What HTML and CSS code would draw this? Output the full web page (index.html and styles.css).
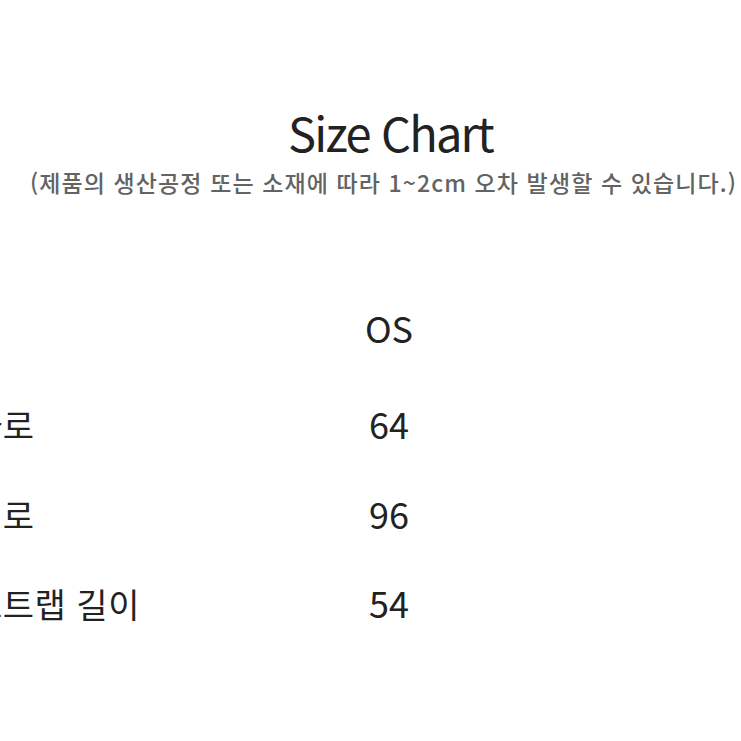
FILE: index.html
```html
<!DOCTYPE html>
<html lang="ko">
<head>
<meta charset="utf-8">
<link rel="stylesheet" href="styles.css">
</head>
<body>
<main class="page">
  <header class="head">
    <h1 class="title">Size Chart</h1>
    <p class="note">(제품의 생산공정 또는 소재에 따라 1~2cm 오차 발생할 수 있습니다.)</p>
  </header>
  <section class="chart">
    <div class="label first"></div><div class="value first">OS</div>
    <div class="label">가로</div><div class="value">64</div>
    <div class="label">세로</div><div class="value">96</div>
    <div class="label">스트랩 길이</div><div class="value">54</div>
  </section>
</main>
</body>
</html>
```

FILE: styles.css
```css
html, body {
  margin: 0;
  padding: 0;
  background: #ffffff;
}
body {
  width: 741px;
  height: 741px;
  overflow: hidden;
  font-family: "Noto Sans CJK KR", "Noto Sans", sans-serif;
  color: #1e1e1e;
}
.page {
  display: flex;
  flex-direction: column;
  padding-top: 97px;
}
.head {
  display: flex;
  flex-direction: column;
  align-items: center;
  padding-left: 26px;
}
.title {
  margin: 0 0 0 14px;
  font-size: 47px;
  font-weight: 400;
  line-height: 70px;
  letter-spacing: -1.8px;
  color: #222;
}
.note {
  margin: 0;
  font-size: 23px;
  line-height: 30px;
  letter-spacing: 1.1px;
  font-weight: 500;
  color: #636363;
  white-space: nowrap;
}
.chart {
  display: grid;
  grid-template-columns: 389px 58px;
  grid-template-rows: 96px;
  grid-auto-rows: 89.5px;
  align-items: baseline;
  margin-left: -29px;
  margin-top: 100px;
}
.label {
  white-space: nowrap;
  font-size: 34px;
  line-height: 60px;
  letter-spacing: 0.5px;
  color: #222;
}
.value {
  text-align: center;
  font-size: 36px;
  line-height: 60px;
  color: #222;
}
```
